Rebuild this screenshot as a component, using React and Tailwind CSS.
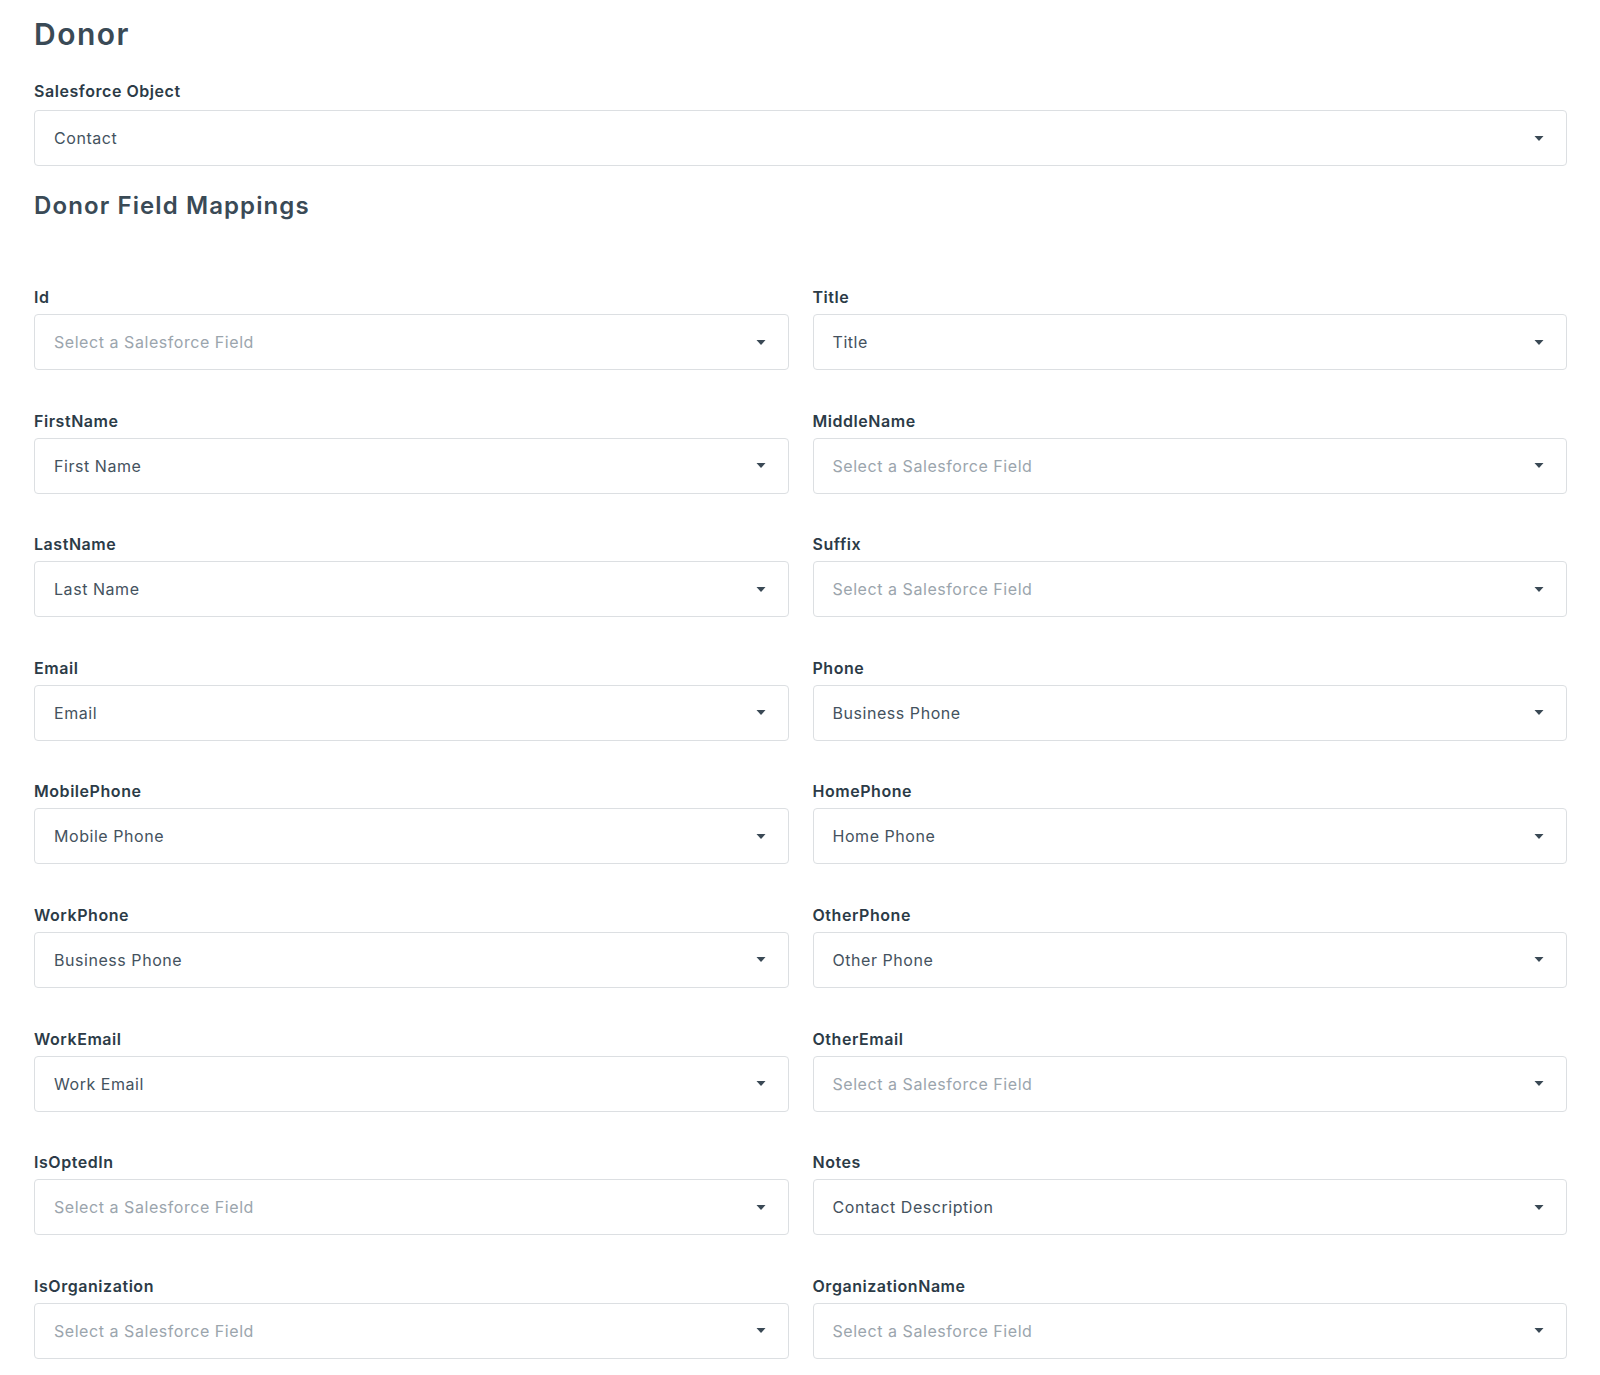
import React from "react";

const rows = [
  ["Id", null, "Title", "Title"],
  ["FirstName", "First Name", "MiddleName", null],
  ["LastName", "Last Name", "Suffix", null],
  ["Email", "Email", "Phone", "Business Phone"],
  ["MobilePhone", "Mobile Phone", "HomePhone", "Home Phone"],
  ["WorkPhone", "Business Phone", "OtherPhone", "Other Phone"],
  ["WorkEmail", "Work Email", "OtherEmail", null],
  ["IsOptedIn", null, "Notes", "Contact Description"],
  ["IsOrganization", null, "OrganizationName", null],
];

function Caret() {
  return (
    <svg width="10" height="5" viewBox="0 0 10 5" className="shrink-0">
      <path d="M0.5 0 L9.5 0 L5 5 Z" fill="#3a4955" />
    </svg>
  );
}

function Select({ value }) {
  return (
    <div className="flex h-[56px] items-center justify-between rounded-[4px] border border-[#dcdfe2] bg-white pl-[19px] pr-[22px]">
      <span
        className={
          value
            ? "text-[16px] tracking-[0.55px] text-[#44525e]"
            : "text-[16px] tracking-[0.55px] text-[#9ba5ad]"
        }
      >
        {value || "Select a Salesforce Field"}
      </span>
      <Caret />
    </div>
  );
}

function Field({ label, value }) {
  return (
    <div className="flex flex-col">
      <div className="mb-[5px] text-[16px] font-semibold leading-6 tracking-[0.55px] text-[#2c3b47]">{label}</div>
      <Select value={value} />
    </div>
  );
}

export default function App() {
  return (
    <div
      className="min-h-[1375px] bg-white pl-[34px] pr-[33px] pt-[16px]"
      style={{ fontFamily: "Inter, 'Noto Sans', sans-serif" }}
    >
      <h1 className="text-[30px] font-semibold leading-9 tracking-[1.5px] text-[#3a4a56]">Donor</h1>
      <div className="mt-[27px] mb-[7px] text-[16px] font-semibold leading-6 tracking-[0.55px] text-[#2c3b47]">
        Salesforce Object
      </div>
      <Select value="Contact" />
      <h2 className="mt-[24px] text-[24px] font-semibold leading-8 tracking-[1.1px] text-[#3a4a56]">
        Donor Field Mappings
      </h2>
      <div className="mt-[63px] grid grid-cols-2 gap-x-[24px] gap-y-[38.6px]">
        {rows.map(([l1, v1, l2, v2]) => (
          <React.Fragment key={l1}>
            <Field label={l1} value={v1} />
            <Field label={l2} value={v2} />
          </React.Fragment>
        ))}
      </div>
    </div>
  );
}
